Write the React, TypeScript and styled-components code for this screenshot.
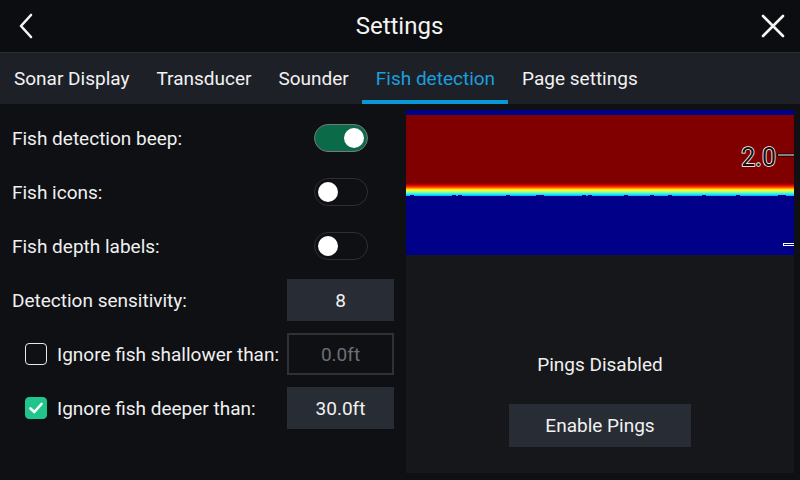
import React from 'react';
import styled, { createGlobalStyle } from 'styled-components';

const GlobalStyle = createGlobalStyle`
  html, body {
    margin: 0;
    padding: 0;
    background: #0f1014;
    font-family: Roboto, "Liberation Sans", sans-serif;
    color: #f2f2f2;
  }
`;

const Screen = styled.div`
  width: 800px;
  height: 480px;
  display: flex;
  flex-direction: column;
  background: #0f1014;
  overflow: hidden;
`;

const Header = styled.header`
  height: 52px;
  display: flex;
  align-items: center;
  justify-content: space-between;
  padding: 0 14px 0 13px;
  background: #0c0d10;
  border-bottom: 1px solid #2b2d33;
`;

const HeaderTitle = styled.h1`
  margin: 0;
  font-size: 24px;
  font-weight: 400;
  color: #f4f4f4;
`;

const IconButton = styled.button`
  background: none;
  border: none;
  padding: 0;
  width: 26px;
  height: 28px;
  display: flex;
  align-items: center;
  justify-content: center;
  color: #f4f4f4;
`;

const TabBar = styled.nav`
  height: 51px;
  display: flex;
  background: #1e2027;
`;

const Tab = styled.div<{ $active?: boolean }>`
  padding: 4px 13px 0 14px;
  display: flex;
  align-items: center;
  font-size: 19px;
  color: ${p => (p.$active ? '#1a9fde' : '#f2f2f2')};
  border-bottom: 4px solid ${p => (p.$active ? '#0a97d6' : 'transparent')};
`;

const Body = styled.div`
  flex: 1;
  display: grid;
  grid-template-columns: 406px 388px;
  padding: 6px 0 7px;
`;

const SettingsList = styled.div`
  padding: 1px 12px 0;
  display: flex;
  flex-direction: column;
`;

const Row = styled.div<{ $indent?: boolean }>`
  height: 54px;
  display: flex;
  align-items: center;
  justify-content: space-between;
  padding-left: ${p => (p.$indent ? '13px' : '0')};
`;

const LabelGroup = styled.label`
  display: flex;
  align-items: center;
  gap: 10px;
`;

const Label = styled.span`
  font-size: 19px;
  color: #f0f0f0;
`;

const Toggle = styled.div<{ $on?: boolean }>`
  width: 54px;
  height: 28px;
  box-sizing: border-box;
  border-radius: 14px;
  margin-right: 26px;
  background: ${p => (p.$on ? '#0b6a47' : '#0f1014')};
  border: 1.5px solid ${p => (p.$on ? '#76787c' : '#2d2f35')};
  display: flex;
  align-items: center;
  justify-content: ${p => (p.$on ? 'flex-end' : 'flex-start')};
  padding: 0 3px;
`;

const Knob = styled.span`
  width: 20px;
  height: 20px;
  border-radius: 50%;
  background: #ffffff;
`;

const ValueBox = styled.div<{ $disabled?: boolean }>`
  width: 107px;
  height: 42px;
  box-sizing: border-box;
  display: flex;
  align-items: center;
  justify-content: center;
  font-size: 19px;
  background: ${p => (p.$disabled ? 'transparent' : '#282c34')};
  border: 2px solid ${p => (p.$disabled ? '#2e3138' : '#282c34')};
  color: ${p => (p.$disabled ? '#6c6f75' : '#f2f2f2')};
`;

const CheckBox = styled.span<{ $checked?: boolean }>`
  width: 22px;
  height: 22px;
  box-sizing: border-box;
  border-radius: 4px;
  border: 1.5px solid ${p => (p.$checked ? '#1fc58a' : '#e8e8e8')};
  background: ${p => (p.$checked ? '#1fc58a' : 'transparent')};
  display: flex;
  align-items: center;
  justify-content: center;
`;

const SonarPanel = styled.section`
  background: #15171b;
  display: flex;
  flex-direction: column;
  align-items: center;
`;

const SonarView = styled.div`
  width: 100%;
  height: 145px;
  background: #000084;
`;

const PingsText = styled.div`
  margin-top: 98px;
  font-size: 19px;
  color: #f0f0f0;
`;

const EnableButton = styled.button`
  margin-top: 28px;
  width: 182px;
  height: 43px;
  border: none;
  background: #282c34;
  color: #f2f2f2;
  font-family: Roboto, "Liberation Sans", sans-serif;
  font-size: 19px;
`;

const notches = [4, 46, 52, 100, 130, 134, 176, 182, 218, 244, 262, 296, 330, 372, 376];

const SonarImage: React.FC = () => (
  <svg width="388" height="145" viewBox="0 0 388 145">
    <defs>
      <linearGradient id="band" x1="0" y1="0" x2="0" y2="1">
        <stop offset="0" stopColor="#800000" />
        <stop offset="0.15" stopColor="#cc0000" />
        <stop offset="0.32" stopColor="#ff3a00" />
        <stop offset="0.46" stopColor="#ffd000" />
        <stop offset="0.58" stopColor="#f0ff40" />
        <stop offset="0.72" stopColor="#80ffa0" />
        <stop offset="0.86" stopColor="#20e8ff" />
        <stop offset="1" stopColor="#00b0ff" />
      </linearGradient>
    </defs>
    <rect x="0" y="0" width="388" height="145" fill="#000088" />
    <rect x="0" y="5" width="388" height="70" fill="#800000" />
    <rect x="0" y="73" width="388" height="13" fill="url(#band)" />
    {notches.map(x => (
      <rect key={x} x={x} y="85" width="4" height="2" fill="#000088" />
    ))}
    <text
      x="370"
      y="56"
      textAnchor="end"
      fontFamily="Roboto, 'Liberation Sans', sans-serif"
      fontSize="25"
      fill="#111"
      stroke="#ffffff"
      strokeWidth="1.6"
      paintOrder="stroke"
    >
      2.0
    </text>
    <rect x="371" y="43.5" width="17" height="3" fill="#000" />
    <rect x="372" y="44.5" width="16" height="1" fill="#fff" />
    <rect x="377" y="133" width="11" height="3" fill="#fff" />
    <rect x="378" y="134" width="10" height="1" fill="#000088" />
  </svg>
);

const App: React.FC = () => {
  return (
    <>
      <GlobalStyle />
      <Screen>
        <Header>
          <IconButton aria-label="Back">
            <svg width="16" height="26" viewBox="0 0 16 26">
              <path d="M13 2 L3 13 L13 24" fill="none" stroke="#f4f4f4" strokeWidth="2.6" strokeLinecap="round" strokeLinejoin="round" />
            </svg>
          </IconButton>
          <HeaderTitle>Settings</HeaderTitle>
          <IconButton aria-label="Close">
            <svg width="24" height="24" viewBox="0 0 24 24">
              <path d="M2 2 L22 22 M22 2 L2 22" fill="none" stroke="#f4f4f4" strokeWidth="2.6" strokeLinecap="round" />
            </svg>
          </IconButton>
        </Header>
        <TabBar>
          <Tab>Sonar Display</Tab>
          <Tab>Transducer</Tab>
          <Tab>Sounder</Tab>
          <Tab $active>Fish detection</Tab>
          <Tab>Page settings</Tab>
        </TabBar>
        <Body>
          <SettingsList>
            <Row>
              <Label>Fish detection beep:</Label>
              <Toggle $on><Knob /></Toggle>
            </Row>
            <Row>
              <Label>Fish icons:</Label>
              <Toggle><Knob /></Toggle>
            </Row>
            <Row>
              <Label>Fish depth labels:</Label>
              <Toggle><Knob /></Toggle>
            </Row>
            <Row>
              <Label>Detection sensitivity:</Label>
              <ValueBox>8</ValueBox>
            </Row>
            <Row $indent>
              <LabelGroup>
                <CheckBox />
                <Label>Ignore fish shallower than:</Label>
              </LabelGroup>
              <ValueBox $disabled>0.0ft</ValueBox>
            </Row>
            <Row $indent>
              <LabelGroup>
                <CheckBox $checked>
                  <svg width="16" height="16" viewBox="0 0 16 16">
                    <path d="M2.5 8.5 L6.3 12 L13.5 4" fill="none" stroke="#fff" strokeWidth="2.6" strokeLinecap="round" strokeLinejoin="round" />
                  </svg>
                </CheckBox>
                <Label>Ignore fish deeper than:</Label>
              </LabelGroup>
              <ValueBox>30.0ft</ValueBox>
            </Row>
          </SettingsList>
          <SonarPanel>
            <SonarView>
              <SonarImage />
            </SonarView>
            <PingsText>Pings Disabled</PingsText>
            <EnableButton>Enable Pings</EnableButton>
          </SonarPanel>
        </Body>
      </Screen>
    </>
  );
};

export default App;
